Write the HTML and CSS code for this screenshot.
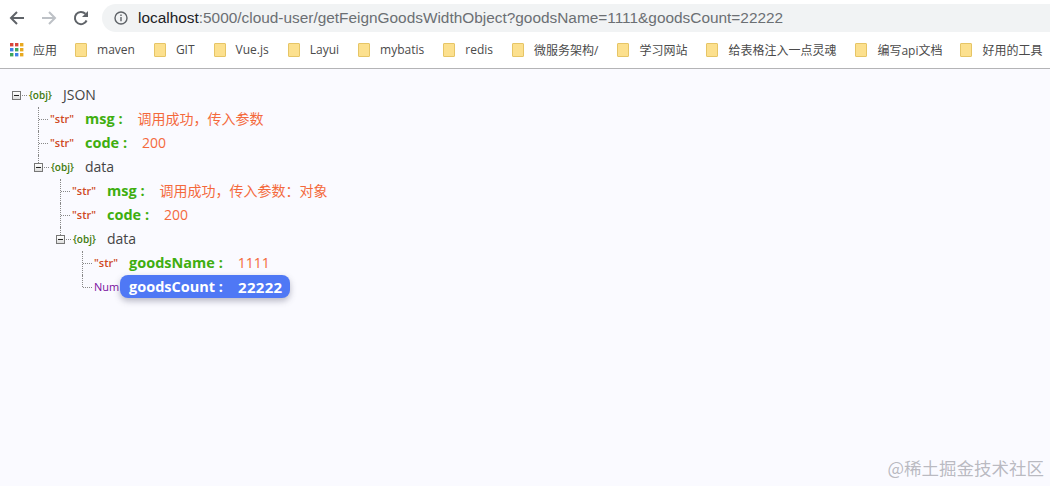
FILE: index.html
```html
<!DOCTYPE html>
<html lang="zh">
<head>
<meta charset="utf-8">
<title>localhost</title>
<link rel="stylesheet" href="styles.css">
</head>
<body>
<header class="chrome">
  <div class="toolbar">
    <button class="nav"><svg width="18" height="18" viewBox="0 0 18 18"><path d="M16 9H3.5M9 3 3 9l6 6" fill="none" stroke="#5f6368" stroke-width="2"/></svg></button>
    <button class="nav"><svg width="18" height="18" viewBox="0 0 18 18"><path d="M2 9h12.5M9 3l6 6-6 6" fill="none" stroke="#bdc1c6" stroke-width="2"/></svg></button>
    <button class="nav"><svg width="18" height="18" viewBox="0 0 18 18"><path d="M14.6 11.5A6.1 6.1 0 1 1 13.4 4.8" fill="none" stroke="#5f6368" stroke-width="2"/><path d="M16 2v6h-6z" fill="#5f6368"/></svg></button>
    <div class="omnibox">
      <svg class="info" width="14" height="14" viewBox="0 0 14 14"><circle cx="7" cy="7" r="6" fill="none" stroke="#5f6368" stroke-width="1.4"/><path d="M6.3 6h1.4v4.2H6.3zM6.3 3.6h1.4V5H6.3z" fill="#5f6368"/></svg>
      <span class="url"><span class="host">localhost</span>:5000/cloud-user/getFeignGoodsWidthObject?goodsName=1111&amp;goodsCount=22222</span>
    </div>
  </div>
  <nav class="bookmarks">
    <a class="apps-link"><svg width="14" height="14" viewBox="0 0 14 14"><rect x="0" y="0" width="3.4" height="3.4" fill="#d9453a"/><rect x="5" y="0" width="3.4" height="3.4" fill="#d9453a"/><rect x="10" y="0" width="3.4" height="3.4" fill="#e8a91f"/><rect x="0" y="5" width="3.4" height="3.4" fill="#3f80e8"/><rect x="5" y="5" width="3.4" height="3.4" fill="#3ca55c"/><rect x="10" y="5" width="3.4" height="3.4" fill="#e8a91f"/><rect x="0" y="10" width="3.4" height="3.4" fill="#3ca55c"/><rect x="5" y="10" width="3.4" height="3.4" fill="#3f80e8"/><rect x="10" y="10" width="3.4" height="3.4" fill="#e8a91f"/></svg>应用</a>
    <a class="mark"><i class="folder"></i>maven</a>
    <a class="mark"><i class="folder"></i>GIT</a>
    <a class="mark"><i class="folder"></i>Vue.js</a>
    <a class="mark"><i class="folder"></i>Layui</a>
    <a class="mark"><i class="folder"></i>mybatis</a>
    <a class="mark"><i class="folder"></i>redis</a>
    <a class="mark"><i class="folder"></i>微服务架构/</a>
    <a class="mark"><i class="folder"></i>学习网站</a>
    <a class="mark"><i class="folder"></i>给表格注入一点灵魂</a>
    <a class="mark tight"><i class="folder"></i>编写api文档</a>
    <a class="mark"><i class="folder"></i>好用的工具</a>
  </nav>
</header>
<main class="page">
  <ul class="tree root">
    <li>
      <div class="row"><span class="sw open"><i class="toggle"></i></span><span class="type obj">{obj}</span><span class="name">JSON</span></div>
      <ul class="tree">
        <li><div class="row"><span class="sw leaf"></span><span class="type str">"str"</span><span class="key">msg :</span><span class="val">调用成功，传入参数</span></div></li>
        <li><div class="row"><span class="sw leaf"></span><span class="type str">"str"</span><span class="key">code :</span><span class="val">200</span></div></li>
        <li>
          <div class="row"><span class="sw open stem"><i class="toggle"></i></span><span class="type obj">{obj}</span><span class="name">data</span></div>
          <ul class="tree">
            <li><div class="row"><span class="sw leaf"></span><span class="type str">"str"</span><span class="key">msg :</span><span class="val">调用成功，传入参数：对象</span></div></li>
            <li><div class="row"><span class="sw leaf"></span><span class="type str">"str"</span><span class="key">code :</span><span class="val">200</span></div></li>
            <li>
              <div class="row"><span class="sw open stem"><i class="toggle"></i></span><span class="type obj">{obj}</span><span class="name">data</span></div>
              <ul class="tree">
                <li><div class="row"><span class="sw leaf"></span><span class="type str">"str"</span><span class="key">goodsName :</span><span class="val">1111</span></div></li>
                <li><div class="row"><span class="sw leaf last"></span><span class="type num">Num</span><span class="pill"><span class="key">goodsCount :</span><span class="val">22222</span></span></div></li>
              </ul>
            </li>
          </ul>
        </li>
      </ul>
    </li>
  </ul>
</main>
<div class="watermark">@稀土掘金技术社区</div>
</body>
</html>
```
FILE: styles.css
```css
* { box-sizing: border-box; }
html, body { margin: 0; height: 100%; }
body {
  width: 1050px;
  height: 486px;
  overflow: hidden;
  position: relative;
  background: #fafaff;
  font-family: "Open Sans", "Noto Sans CJK SC", sans-serif;
}
.chrome { background: #fff; border-bottom: 1px solid #b4b4b6; height: 69px; }
.toolbar { height: 36px; display: flex; align-items: center; padding-left: 1px; }
.nav {
  width: 32px; height: 32px; padding: 0; border: 0; background: none;
  display: flex; align-items: center; justify-content: center;
}
.omnibox {
  flex: 1; height: 28px; margin-left: 5px;
  background: #f1f3f4; border-radius: 14px 0 0 14px;
  display: flex; align-items: center; padding-left: 12px;
}
.info { margin-right: 10px; }
.url { font: 15.4px "Liberation Sans", sans-serif; color: #6b6f73; white-space: nowrap; }
.host { color: #202124; }
.bookmarks {
  height: 32px; display: flex; align-items: center; padding: 0 0 5px 10px;
  font: 12px "Open Sans", "Noto Sans CJK SC", sans-serif; color: #4a4a4a;
  white-space: nowrap;
}
.bookmarks a { display: flex; align-items: center; }
.apps-link svg { margin-right: 9px; }
.apps-link { margin-right: 18px; }
.mark { margin-right: 19px; }
.mark.tight { margin-right: 18px; }
.folder {
  width: 12px; height: 14px; margin-right: 10px;
  background: #fce08e; border: 1px solid #e6c566; border-radius: 1px;
}
.page { padding: 14px 0 0 12px; }
.tree { list-style: none; margin: 0 0 0 22px; padding: 0; }
.tree.root { margin-left: 0; }
.row {
  height: 24px; display: flex; align-items: center; white-space: nowrap;
  font-size: 14px; line-height: 20px; color: #444;
}
.sw { width: 16px; height: 24px; position: relative; flex: none; }
.toggle {
  position: absolute; left: 0; top: 8px; width: 9px; height: 9px;
  border: 1px solid #777; background: linear-gradient(#fff, #ddd);
}
.toggle::after {
  content: ""; position: absolute; left: 1px; top: 3px; width: 5px; height: 1px; background: #222;
}
.open::after {
  content: ""; position: absolute; left: 10px; top: 12px; width: 5px;
  border-top: 1px dotted #888;
}
.stem::before {
  content: ""; position: absolute; left: 4px; top: 0; height: 8px;
  border-left: 1px dotted #888;
}
.leaf::before {
  content: ""; position: absolute; left: 4px; top: 0; height: 24px;
  border-left: 1px dotted #888;
}
.leaf.last::before { height: 12px; }
.leaf::after {
  content: ""; position: absolute; left: 5px; top: 12px; width: 9px;
  border-top: 1px dotted #888;
}
.type { font-size: 10px; flex: none; }
.obj { width: 34px; margin-left: 1px; color: #3f7a0c; font-weight: 600; }
.str { width: 26px; font-size: 11px; color: #cf4a24; font-weight: 600; }
.num { width: 26px; color: #7a0fa0; font-weight: 400; font-size: 11px; }
.key { color: #3fae10; font-weight: 700; font-size: 14.5px; margin-left: 9px; margin-right: 15px; }
.val { color: #f4693c; }
.pill {
  display: flex; align-items: center; height: 23px; padding-right: 8px; margin-top: -1px;
  background: #4f78f5; border-radius: 8px;
  box-shadow: 0 3px 6px rgba(60, 60, 90, .35);
}
.pill .key, .pill .val { color: #fff; font-weight: 700; }
.pill .val { font-size: 15px; letter-spacing: .3px; }
.watermark {
  position: absolute; right: 6px; bottom: 6px;
  font: 17.5px "Noto Sans CJK SC", sans-serif; color: rgba(130, 130, 140, .55);
}
```
